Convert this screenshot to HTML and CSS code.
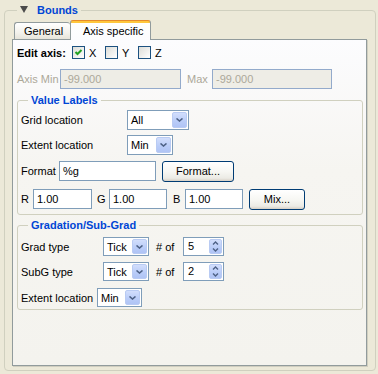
FILE: index.html
```html
<!DOCTYPE html>
<html>
<head>
<meta charset="utf-8">
<link rel="stylesheet" href="styles.css">
</head>
<body>
<fieldset class="bounds">
  <legend class="bounds-title"><svg class="tri" width="8" height="7" viewBox="0 0 8 7"><polygon points="0,0 8,0 4,7"/></svg><span>Bounds</span></legend>
  <div class="tabs">
    <div class="tab general">General</div>
    <div class="tab active">Axis specific</div>
  </div>
  <div class="panel">
    <div class="edit">
      <span class="blabel">Edit axis:</span>
      <span class="cb-item"><span class="cb"><svg width="11" height="11" viewBox="0 0 11 11"><polyline points="2.5,5 4.5,7 8.5,3" fill="none" stroke="#21A121" stroke-width="2"/></svg></span>X</span>
      <span class="cb-item"><span class="cb"></span>Y</span>
      <span class="cb-item"><span class="cb"></span>Z</span>
    </div>
    <div class="axis">
      <span class="dlabel w-axismin">Axis Min</span>
      <div class="input disabled w-min">-99.000</div>
      <span class="dlabel w-max">Max</span>
      <div class="input disabled w-maxin">-99.000</div>
    </div>

    <fieldset class="group vl">
      <legend>Value Labels</legend>
      <div class="frow r-grid">
        <span class="lbl w-106">Grid location</span>
        <div class="select w-62"><span class="val">All</span><span class="drop"><svg width="7" height="4" viewBox="0 0 7 4"><polyline points="0.5,0.5 3.5,3 6.5,0.5" fill="none" stroke="#4D6185" stroke-width="1.6"/></svg></span></div>
      </div>
      <div class="frow r-ext">
        <span class="lbl w-106">Extent location</span>
        <div class="select w-46"><span class="val">Min</span><span class="drop"><svg width="7" height="4" viewBox="0 0 7 4"><polyline points="0.5,0.5 3.5,3 6.5,0.5" fill="none" stroke="#4D6185" stroke-width="1.6"/></svg></span></div>
      </div>
      <div class="frow r-fmt">
        <span class="lbl w-38">Format</span>
        <div class="input w-97">%g</div>
        <div class="btn w-72 ml-6">Format...</div>
      </div>
      <div class="frow r-rgb">
        <span class="lbl w-12">R</span>
        <div class="input w-59">1.00</div>
        <span class="lbl w-12 ml-5">G</span>
        <div class="input w-58">1.00</div>
        <span class="lbl w-12 ml-6">B</span>
        <div class="input w-58">1.00</div>
        <div class="btn w-56 ml-6">Mix...</div>
      </div>
    </fieldset>

    <fieldset class="group gr">
      <legend>Gradation/Sub-Grad</legend>
      <div class="frow r-g1">
        <span class="lbl w-82">Grad type</span>
        <div class="select small w-46"><span class="val">Tick</span><span class="drop"><svg width="7" height="4" viewBox="0 0 7 4"><polyline points="0.5,0.5 3.5,3 6.5,0.5" fill="none" stroke="#4D6185" stroke-width="1.6"/></svg></span></div>
        <span class="lbl w-27 ml-7"># of</span>
        <div class="spin"><span class="val">5</span><span class="sbtn"><svg width="7" height="13" viewBox="0 0 7 13"><polyline points="1,4.5 3.5,2 6,4.5" fill="none" stroke="#4D6185" stroke-width="1.4"/><polyline points="1,8.5 3.5,11 6,8.5" fill="none" stroke="#4D6185" stroke-width="1.4"/></svg></span></div>
      </div>
      <div class="frow r-g2">
        <span class="lbl w-82">SubG type</span>
        <div class="select small w-46"><span class="val">Tick</span><span class="drop"><svg width="7" height="4" viewBox="0 0 7 4"><polyline points="0.5,0.5 3.5,3 6.5,0.5" fill="none" stroke="#4D6185" stroke-width="1.6"/></svg></span></div>
        <span class="lbl w-27 ml-7"># of</span>
        <div class="spin"><span class="val">2</span><span class="sbtn"><svg width="7" height="13" viewBox="0 0 7 13"><polyline points="1,4.5 3.5,2 6,4.5" fill="none" stroke="#4D6185" stroke-width="1.4"/><polyline points="1,8.5 3.5,11 6,8.5" fill="none" stroke="#4D6185" stroke-width="1.4"/></svg></span></div>
      </div>
      <div class="frow r-g3">
        <span class="lbl w-76">Extent location</span>
        <div class="select small w-45"><span class="val">Min</span><span class="drop"><svg width="7" height="4" viewBox="0 0 7 4"><polyline points="0.5,0.5 3.5,3 6.5,0.5" fill="none" stroke="#4D6185" stroke-width="1.6"/></svg></span></div>
      </div>
    </fieldset>
  </div>
</fieldset>
</body>
</html>
```
FILE: styles.css
```css
* { box-sizing: border-box; }

html, body {
  margin: 0;
  padding: 0;
}

body {
  width: 378px;
  height: 374px;
  overflow: hidden;
  background: #ECE9D8;
  font-family: "Liberation Sans", Arial, sans-serif;
  font-size: 11px;
  color: #000;
}

.bounds {
  margin: 4px 2px 0 4px;
  padding: 0 8px 4px 7px;
  border: 1px solid #D0D0BF;
  border-radius: 4px;
  min-width: 0;
}

.bounds-title {
  margin-left: 5px;
  padding: 0 3px;
  height: 13px;
  line-height: 13px;
  font-weight: bold;
  color: #0046D5;
  white-space: nowrap;
}

.bounds-title .tri {
  fill: #4B4B4B;
  vertical-align: 1px;
  margin-right: 9px;
}

.tabs {
  display: flex;
  align-items: flex-end;
  height: 19px;
  margin-top: 3px;
  padding-left: 2px;
}

.tab {
  border: 1px solid #919B9C;
  border-bottom: none;
  border-radius: 3px 3px 0 0;
  white-space: nowrap;
}

.tab.general {
  width: 56px;
  height: 17px;
  line-height: 16px;
  padding-left: 9px;
  background: linear-gradient(#FFFFFF, #F3F2EC 60%, #E6E4DA);
  border-right: none;
}

.tab.active {
  position: relative;
  z-index: 1;
  width: 81px;
  height: 20px;
  margin-bottom: -1px;
  line-height: 20px;
  padding-left: 12px;
  border-top-color: #E68B2C;
  background: linear-gradient(#FFC73C 0 2px, #FFFFFF 2px, #FCFCFE);
}

.panel {
  height: 327px;
  border: 1px solid #919B9C;
  background: linear-gradient(#FCFCFE, #F6F5F1 40%, #F4F3EE);
  padding: 0 3px 0 4px;
  box-shadow: 1px 1px 0 #D0CEC0;
}

.edit {
  display: flex;
  align-items: center;
  height: 13px;
  margin-top: 6px;
}

.blabel {
  font-weight: bold;
  width: 55px;
  white-space: nowrap;
}

.cb-item {
  display: flex;
  align-items: center;
  width: 33px;
}

.cb {
  width: 13px;
  height: 13px;
  border: 1px solid #1C5180;
  background: linear-gradient(135deg, #DCDCD7, #FFFFFF);
  margin-right: 4px;
  display: flex;
  align-items: center;
  justify-content: center;
}

.axis {
  display: flex;
  align-items: center;
  height: 20px;
  margin-top: 10px;
}

.dlabel { color: #ACA899; white-space: nowrap; }
.w-axismin { width: 43px; }
.w-max { width: 25px; margin-left: 6px; }
.w-min { width: 121px; }
.w-maxin { width: 120px; }

.input {
  height: 20px;
  border: 1px solid #7F9DB9;
  background: #FFFFFF;
  padding-left: 3px;
  line-height: 18px;
  white-space: nowrap;
}

.input.disabled {
  background: #EEEDE6;
  color: #ACA899;
  border-color: #93AACB;
}

.group {
  margin: 0;
  padding: 0 3px;
  border: 1px solid #D0D0BF;
  border-radius: 3px;
  min-width: 0;
}

.group legend {
  margin-left: 7px;
  padding: 0 3px;
  line-height: 13px;
  height: 13px;
  font-weight: bold;
  color: #0046D5;
}

.vl { margin-top: 5px; padding-bottom: 4px; }
.gr { margin-top: 4px; padding-bottom: 2px; }

.frow {
  display: flex;
  align-items: center;
}

.r-grid { margin-top: 3px; height: 20px; }
.r-ext { margin-top: 5px; height: 20px; }
.r-fmt { margin-top: 6px; height: 21px; align-items: flex-start; }
.r-rgb { margin-top: 7px; height: 21px; align-items: flex-start; }
.r-rgb .lbl { line-height: 20px; }
.r-fmt .lbl { line-height: 20px; }
.r-g1 { margin-top: 5px; height: 19px; }
.r-g2 { margin-top: 6px; height: 19px; }
.r-g3 { margin-top: 7px; height: 19px; }

.lbl { white-space: nowrap; }

.w-106 { width: 106px; }
.w-82 { width: 82px; }
.w-76 { width: 76px; }
.w-38 { width: 38px; }
.w-27 { width: 27px; }
.w-12 { width: 12px; }
.w-97 { width: 97px; }
.w-72 { width: 72px; }
.w-62 { width: 62px; }
.w-59 { width: 59px; }
.w-58 { width: 58px; }
.w-56 { width: 56px; }
.w-46 { width: 46px; }
.w-45 { width: 45px; }
.ml-5 { margin-left: 5px; }
.ml-6 { margin-left: 6px; }
.ml-7 { margin-left: 7px; }

.select {
  display: flex;
  height: 20px;
  border: 1px solid #7F9DB9;
  background: #FFFFFF;
  padding: 1px;
}

.select.small { height: 19px; }

.select .val {
  flex: 1;
  padding-left: 2px;
  line-height: 16px;
  white-space: nowrap;
}

.select .drop,
.spin .sbtn {
  width: 15px;
  border: 1px solid #B9CBF3;
  border-radius: 2px;
  background: linear-gradient(#D2DEFC, #B9CCF8 60%, #B0C4F5);
  display: flex;
  align-items: center;
  justify-content: center;
}

.spin {
  display: flex;
  width: 41px;
  height: 19px;
  border: 1px solid #7F9DB9;
  background: #FFFFFF;
  padding: 1px;
}

.spin .val {
  flex: 1;
  padding-left: 3px;
  line-height: 15px;
}

.spin .sbtn { width: 13px; }

.btn {
  height: 21px;
  border: 1px solid #003C74;
  border-radius: 3px;
  background: linear-gradient(#FFFFFF, #F7F7F3 50%, #ECEBE5 85%, #D6D0C5);
  text-align: center;
  line-height: 19px;
  white-space: nowrap;
}
```
